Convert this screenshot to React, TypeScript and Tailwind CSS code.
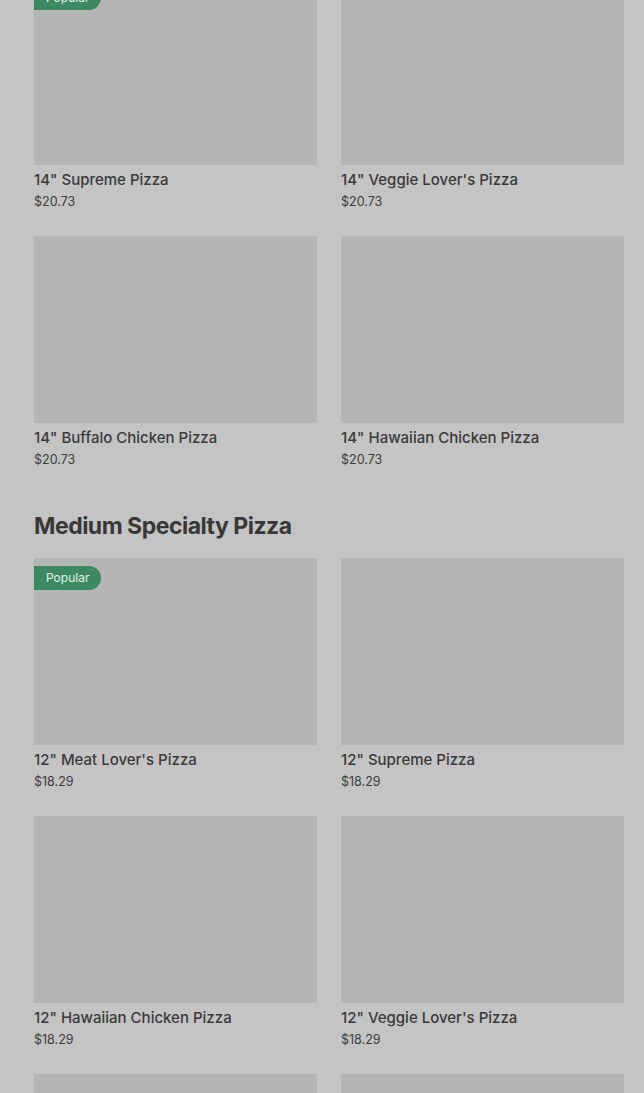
import React from "react";

type Item = { name?: string; price?: string; popular?: boolean };

const Card = ({ item }: { item: Item }) => (
  <div className="flex flex-col">
    <div className="relative h-[187px] bg-[#b5b5b5]">
      {item.popular && (
        <span className="absolute left-0 top-[8px] flex h-[24px] items-center rounded-r-full bg-[#3b8a61] pl-[12px] pr-[12px] text-[12px] text-[#e6efe9]">
          Popular
        </span>
      )}
    </div>
    {item.name && (
      <>
        <div className="mt-[4px] text-[15px] leading-[22px] font-medium text-[#3a3a3a]">{item.name}</div>
        <div className="mt-[1px] text-[12.5px] leading-[20px] text-[#3c3c3c]">{item.price}</div>
      </>
    )}
  </div>
);

const Grid = ({ items }: { items: Item[] }) => (
  <div className="grid grid-cols-2 gap-x-[24px] gap-y-[24px]">
    {items.map((it, i) => (
      <Card key={i} item={it} />
    ))}
  </div>
);

export default function App() {
  const large: Item[] = [
    { name: '14" Supreme Pizza', price: "$20.73", popular: true },
    { name: "14\" Veggie Lover's Pizza", price: "$20.73" },
    { name: '14" Buffalo Chicken Pizza', price: "$20.73" },
    { name: '14" Hawaiian Chicken Pizza', price: "$20.73" },
  ];
  const medium: Item[] = [
    { name: "12\" Meat Lover's Pizza", price: "$18.29", popular: true },
    { name: '12" Supreme Pizza', price: "$18.29" },
    { name: '12" Hawaiian Chicken Pizza', price: "$18.29" },
    { name: "12\" Veggie Lover's Pizza", price: "$18.29" },
    {},
    {},
  ];
  return (
    <div
      className="h-[1093px] overflow-hidden bg-[#c4c4c4]"
      style={{ fontFamily: "Inter, 'Noto Sans', sans-serif" }}
    >
      <div className="-mt-[22px] pl-[34px] pr-[20px]">
        <Grid items={large} />
        <h2 className="mt-[40px] mb-[16px] text-[23px] leading-[32px] font-bold tracking-[-0.5px] text-[#383838]">
          Medium Specialty Pizza
        </h2>
        <Grid items={medium} />
      </div>
    </div>
  );
}
